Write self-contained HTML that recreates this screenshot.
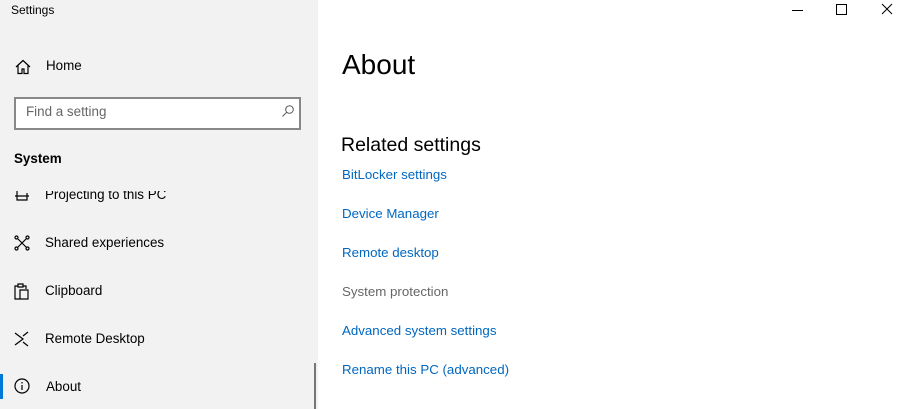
<!DOCTYPE html>
<html><head><style>
body{margin:0;width:903px;height:409px;overflow:hidden;font-family:"Liberation Sans",sans-serif;background:#fff;position:relative}
.side{position:absolute;left:0;top:0;width:318px;height:409px;background:#f2f2f2}
.t{position:absolute;white-space:nowrap}
.nav{font-size:13.4px;color:#000}
.link{font-size:13.3px;color:#0067c0;left:342px}
svg{position:absolute}
</style></head><body>
<div class="side">
<div class="t" style="left:11px;top:3px;font-size:12px">Settings</div>
<svg style="left:14px;top:58px" width="18" height="18" viewBox="0 0 18 18" fill="none" stroke="#000" stroke-width="1.2"><path d="M2 9L9 2.5 16 9M4 7.5V15.5H8V11H10V15.5H14V7.5"/></svg>
<div class="t nav" style="left:46px;top:58px">Home</div>
<div style="position:absolute;left:14px;top:97px;width:283px;height:29px;border:2px solid #888;background:#fff"></div>
<div class="t" style="left:26px;top:104px;font-size:13.4px;color:#666">Find a setting</div>
<svg style="left:281px;top:104px" width="14" height="14" viewBox="0 0 14 14" fill="none" stroke="#555" stroke-width="1"><circle cx="8.5" cy="5.5" r="3.8"/><path d="M5.8 8.2L1.5 12.5"/></svg>
<div class="t" style="left:14px;top:151px;font-size:13.4px;font-weight:bold">System</div>
<svg style="left:14px;top:190px" width="16" height="12" viewBox="0 0 16 12" fill="none" stroke="#000" stroke-width="1.2"><path d="M1 6H15M3 1V10H13V3"/></svg>
<div class="t nav" style="left:45px;top:187px;clip-path:inset(4px 0 0 0)">Projecting to this PC</div>
<svg style="left:14px;top:235px" width="16" height="16" viewBox="0 0 16 16" fill="none" stroke="#000" stroke-width="1.2"><circle cx="2.5" cy="2.5" r="1.5"/><circle cx="13.5" cy="2.5" r="1.5"/><circle cx="2.5" cy="13.5" r="1.5"/><circle cx="13.5" cy="13.5" r="1.5"/><path d="M4 4L12 12M12 4L4 12"/></svg>
<div class="t nav" style="left:45px;top:235px">Shared experiences</div>
<svg style="left:14px;top:283px" width="16" height="17" viewBox="0 0 16 17" fill="none" stroke="#000" stroke-width="1.2"><path d="M4 3H1V16H6M12 6V3H9M4 1H9V4H4Z M6 7H14V16H6Z"/></svg>
<div class="t nav" style="left:45px;top:283px">Clipboard</div>
<svg style="left:14px;top:331px" width="16" height="16" viewBox="0 0 16 16" fill="none" stroke="#000" stroke-width="1.2"><path d="M1 14L9 8 1 2M14 1L9 5M9 11L14 15"/></svg>
<div class="t nav" style="left:45px;top:331px">Remote Desktop</div>
<div style="position:absolute;left:0;top:374px;width:3px;height:25px;background:#0078d7"></div>
<svg style="left:14px;top:378px" width="16" height="16" viewBox="0 0 16 16" fill="none" stroke="#000" stroke-width="1.2"><circle cx="8" cy="8" r="7"/><path d="M8 7V12M8 4V5.5"/></svg>
<div class="t nav" style="left:46px;top:379px">About</div>
<div style="position:absolute;left:314px;top:363px;width:2px;height:46px;background:#777"></div>
</div>
<svg style="left:790px;top:0" width="113" height="20" viewBox="0 0 113 20" stroke="#000" stroke-width="1" fill="none"><path d="M2 10.5H13M46.5 4.5H56.5V14.5H46.5Z M92 4L102 14M102 4L92 14"/></svg>
<div class="t" style="left:342px;top:49px;font-size:28px">About</div>
<div class="t" style="left:341px;top:134px;font-size:19.5px">Related settings</div>
<div class="t link" style="top:167px">BitLocker settings</div>
<div class="t link" style="top:206px">Device Manager</div>
<div class="t link" style="top:245px">Remote desktop</div>
<div class="t link" style="top:284px;color:#666">System protection</div>
<div class="t link" style="top:323px">Advanced system settings</div>
<div class="t link" style="top:362px">Rename this PC (advanced)</div>
</body></html>
